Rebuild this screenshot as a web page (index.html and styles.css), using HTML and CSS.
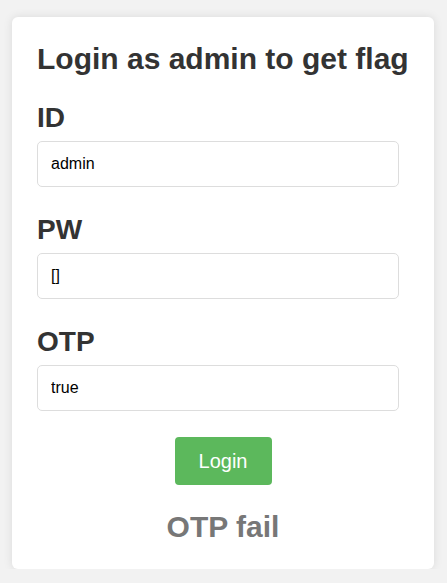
FILE: index.html
```html
<!DOCTYPE html>
<html>
<head>
<meta charset="utf-8">
<link rel="stylesheet" href="styles.css">
</head>
<body>
<div class="card">
  <h2 class="title">Login as admin to get flag</h2>
  <div class="group">
    <label class="label" for="id">ID</label>
    <input class="field" id="id" type="text" value="admin">
  </div>
  <div class="group">
    <label class="label" for="pw">PW</label>
    <input class="field" id="pw" type="text" value="[]">
  </div>
  <div class="group">
    <label class="label" for="otp">OTP</label>
    <input class="field" id="otp" type="text" value="true">
  </div>
  <div class="actions">
    <button class="btn" type="button">Login</button>
  </div>
  <h2 class="result">OTP fail</h2>
</div>
</body>
</html>
```
FILE: styles.css
```css
html, body {
  margin: 0;
  padding: 0;
  background: #f2f2f2;
  font-family: "Liberation Sans", Arial, sans-serif;
  color: #333;
}
body {
  padding-top: 17px;
}
.card {
  box-sizing: border-box;
  width: 422px;
  margin-left: 12px;
  background: #fff;
  border-radius: 6px;
  box-shadow: 0 0 10px rgba(0, 0, 0, 0.1);
  padding: 25px 25px 26px;
  display: flex;
  flex-direction: column;
}
.title {
  margin: 0;
  font-size: 30px;
  line-height: 33px;
  font-weight: bold;
}
.group {
  display: flex;
  flex-direction: column;
  gap: 8px;
  margin-top: 27px;
}
.group + .group {
  margin-top: 27px;
}
.label {
  font-size: 28px;
  line-height: 31px;
  font-weight: bold;
}
.field {
  box-sizing: border-box;
  width: 362px;
  height: 46px;
  border: 1px solid #ddd;
  border-radius: 5px;
  padding: 0 13px;
  font-family: "Liberation Sans", Arial, sans-serif;
  font-size: 16px;
  color: #000;
  background: #fff;
  outline: none;
}
.actions {
  display: flex;
  justify-content: center;
  margin-top: 26px;
}
.btn {
  box-sizing: border-box;
  width: 97px;
  height: 48px;
  border: none;
  border-radius: 4px;
  background: #5cb85c;
  color: #fff;
  font-family: "Liberation Sans", Arial, sans-serif;
  font-size: 20px;
  padding: 0;
}
.result {
  margin: 25px 0 0;
  text-align: center;
  font-size: 30px;
  line-height: 33px;
  font-weight: bold;
  color: #777;
}
```
